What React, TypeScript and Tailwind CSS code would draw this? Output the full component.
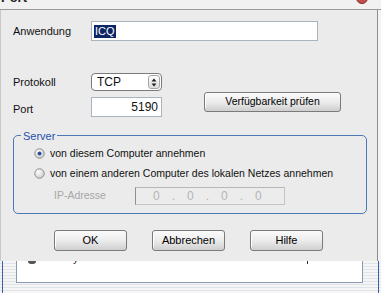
import React from "react";

function Radio({ checked }: { checked?: boolean }) {
  return (
    <svg width="11" height="11" viewBox="0 0 11 11" className="shrink-0">
      <defs>
        <radialGradient id={checked ? "rg1" : "rg2"} cx="0.35" cy="0.3" r="0.8">
          <stop offset="0" stopColor="#ffffff" />
          <stop offset="1" stopColor="#c9c9c9" />
        </radialGradient>
      </defs>
      <circle cx="5.5" cy="5.5" r="4.7" fill={`url(#${checked ? "rg1" : "rg2"})`} stroke="#8a8a8a" strokeWidth="1" />
      {checked && <circle cx="5.5" cy="5.5" r="2" fill="#2a4f9e" />}
    </svg>
  );
}

function XpButton({ children, className = "" }: { children: React.ReactNode; className?: string }) {
  return (
    <div
      className={`flex items-center justify-center rounded-[3px] border border-[#7a7a7a] bg-gradient-to-b from-[#fbfbfb] via-[#ececec] to-[#cfcfcf] text-black shadow-[inset_0_-2px_0_#d2d2d2,inset_1px_0_0_#fff] ${className}`}
    >
      {children}
    </div>
  );
}

export default function App() {
  return (
    <div className="w-[381px] h-[293px] overflow-hidden bg-[#f3f3f3] font-['Liberation_Sans',Arial,sans-serif] text-[11px] text-[#111]">
      {/* title strip, cut off */}
      <div className="relative h-[10px] border-b border-[#9a9a9a] bg-[#f1f1f1] overflow-hidden">
        <span className="absolute left-[1px] top-[-10px] text-[13px] leading-[16px] font-bold text-[#222]">Port</span>
        <span className="absolute left-[356px] top-[-8px] h-[12px] w-[12px] rounded-full bg-[#c0504d] border border-[#8b2a28]" />
      </div>

      {/* dialog body */}
      <div className="flex h-[251px] w-[378px] flex-col border-r border-[#8e8e8e] border-l border-l-[#c8c8c8] bg-[#ebebeb] pl-[12px]">
        {/* Anwendung */}
        <div className="mt-[11px] flex h-[20px] items-center">
          <span className="w-[78px]">Anwendung</span>
          <div className="flex h-[20px] w-[227px] items-center border border-[#a9b4bf] bg-white px-[2px]">
            <span className="bg-[#0b2565] px-[1px] leading-[13px] text-white">ICQ</span>
          </div>
        </div>

        {/* Protokoll */}
        <div className="mt-[32px] flex h-[18px] items-center">
          <span className="w-[78px]">Protokoll</span>
          <div className="flex h-[18px] w-[71px] items-center justify-between rounded-[4px] border border-[#7b7b7b] bg-white pl-[5px] pr-[1px]">
            <span className="text-[12px]">TCP</span>
            <div className="flex h-[14px] w-[12px] flex-col items-center justify-center rounded-[3px] border border-[#a7a7a7] bg-gradient-to-b from-[#ffffff] to-[#dcdcdc]">
              <svg width="6" height="9" viewBox="0 0 6 9">
                <path d="M3 0.5 L5.5 3.5 H0.5 Z" fill="#222" />
                <path d="M3 8.5 L5.5 5.5 H0.5 Z" fill="#222" />
              </svg>
            </div>
          </div>
        </div>

        {/* Port */}
        <div className="mt-[1px] flex items-start">
          <span className="mt-[9px] w-[78px]">Port</span>
          <div className="mt-[5px] flex h-[20px] w-[71px] items-center justify-end border border-[#a9b4bf] bg-white pr-[3px] text-[12px]">
            5190
          </div>
          <XpButton className="ml-[42px] h-[20px] w-[137px] text-[10.5px]">Verfügbarkeit prüfen</XpButton>
        </div>

        {/* Server group */}
        <div className="relative mt-[17px] h-[79px] w-[354px] rounded-[5px] border border-[#4a78b8] pl-[20px] pt-[11px]">
          <span className="absolute left-[7px] top-[-8px] bg-[#ebebeb] px-[2px] text-[#1f4fb0]">Server</span>
          <div className="flex h-[14px] items-center gap-[5px] text-[10.5px]">
            <Radio checked />
            <span>von diesem Computer annehmen</span>
          </div>
          <div className="mt-[6px] flex h-[14px] items-center gap-[5px] text-[10.5px]">
            <Radio />
            <span>von einem anderen Computer des lokalen Netzes annehmen</span>
          </div>
          <div className="mt-[6px] flex items-center">
            <span className="ml-[20px] w-[81px] text-[10.5px] text-[#a7a7a7]">IP-Adresse</span>
            <div className="flex h-[18px] w-[150px] items-center border border-[#c4c4c4] border-l-[#8f8f8f] border-t-[#b8b8b8] bg-[#ececec] pl-[17px] text-[12px] text-[#b4b4b4]">
              <span>0</span>
              <span className="ml-[12px]">.</span>
              <span className="ml-[12px]">0</span>
              <span className="ml-[12px]">.</span>
              <span className="ml-[12px]">0</span>
              <span className="ml-[12px]">.</span>
              <span className="ml-[12px]">0</span>
            </div>
          </div>
        </div>

        {/* buttons */}
        <div className="mt-[16px] flex">
          <XpButton className="ml-[41px] h-[21px] w-[73px] text-[11px]">OK</XpButton>
          <XpButton className="ml-[25px] h-[21px] w-[73px] text-[11px]">Abbrechen</XpButton>
          <XpButton className="ml-[25px] h-[21px] w-[73px] text-[11px]">Hilfe</XpButton>
        </div>
      </div>

      {/* underlying window, partly visible */}
      <div className="flex h-[32px] w-[381px] bg-[repeating-linear-gradient(to_bottom,#f5f5f5_0px,#f5f5f5_2px,#dfe3ea_2px,#dfe3ea_3px)]">
        <div className="ml-[2px] h-full w-[1px] bg-[#3a5fa8]" />
        <div className="relative ml-[13px] h-[22px] w-[347px] overflow-hidden border-x border-b border-[#8a98b0] bg-white">
          <span className="absolute left-[11px] top-0 h-[3px] w-[8px] rounded-b-full bg-[#555]" />
          <span className="absolute left-[56px] top-[-9px] leading-[13px] text-[#333]">y</span>
          <span className="absolute left-[290px] top-0 h-[3px] w-[1px] bg-[#333]" />
        </div>
        <div className="ml-[15px] h-full w-[1px] bg-[#3a5fa8]" />
      </div>
    </div>
  );
}
